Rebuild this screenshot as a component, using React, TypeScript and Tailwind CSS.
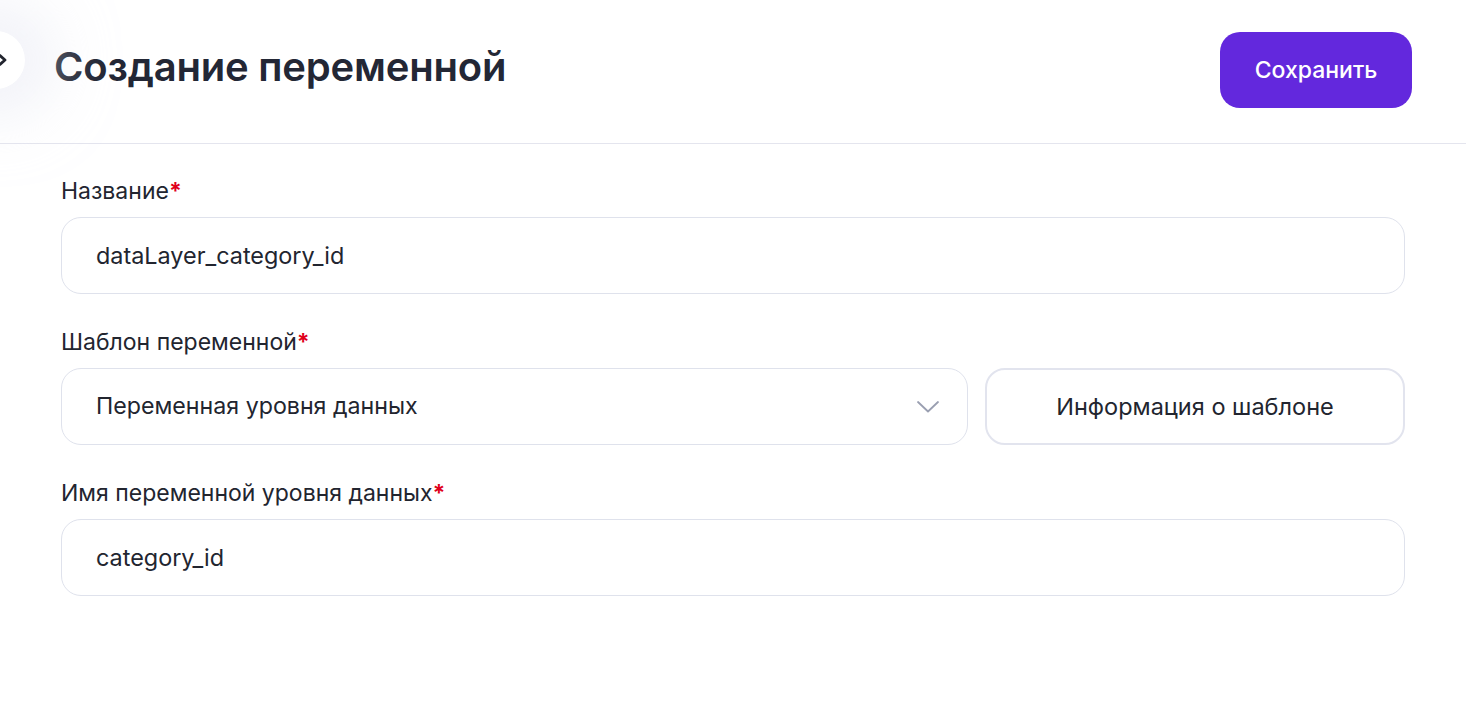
import React from "react";

const Req = () => <span className="font-bold text-[#e0001b]">*</span>;

export default function App() {
  return (
    <div className="relative min-h-[704px] w-full overflow-hidden bg-white text-[#22252f]" style={{ fontFamily: "Inter, 'Noto Sans', sans-serif" }}>
      <div className="absolute left-[-33px] top-[31px] flex h-[58px] w-[58px] items-center justify-end rounded-full bg-white pr-[17px] shadow-[0_0_60px_30px_rgba(230,232,242,0.55)]">
        <svg width="10" height="12" viewBox="0 0 10 12" fill="none">
          <path d="M2 1.5 L7 6 L2 10.5" stroke="#22252f" strokeWidth="2.8" strokeLinecap="round" strokeLinejoin="round" />
        </svg>
      </div>
      <header className="flex h-[144px] items-center justify-between border-b border-[#e4e5ee] pl-[54px] pr-[54px]">
        <h1 className="mb-[9px] text-[40px] font-semibold leading-[48px] tracking-[-0.2px] text-[#232735]">Создание переменной</h1>
        <button className="mt-[-3px] h-[76px] w-[192px] rounded-[20px] bg-[#6328dd] text-[23px] font-medium text-white">Сохранить</button>
      </header>
      <main className="flex flex-col gap-[35px] px-[61px] pt-[34px]">
        <div className="flex flex-col gap-[12px]">
          <label className="text-[23px] leading-[27px]">Название<Req /></label>
          <div className="flex h-[77px] items-center rounded-[20px] border border-[#dfe2ec] px-[34px] text-[23.4px]">dataLayer_category_id</div>
        </div>
        <div className="flex flex-col gap-[12px]">
          <label className="text-[23px] leading-[27px]">Шаблон переменной<Req /></label>
          <div className="flex gap-[17px]">
            <div className="flex h-[77px] flex-1 items-center justify-between rounded-[20px] border border-[#dfe2ec] pl-[34px] pr-[27px] text-[23.2px]">
              <span>Переменная уровня данных</span>
              <svg width="24" height="14" viewBox="0 0 24 14" fill="none">
                <path d="M2 2 L12 11.5 L22 2" stroke="#9a9fb1" strokeWidth="1.8" strokeLinecap="round" strokeLinejoin="round" />
              </svg>
            </div>
            <button className="flex h-[77px] w-[420px] items-center justify-center rounded-[20px] border-2 border-[#e2e4ee] text-[23.5px]">Информация о шаблоне</button>
          </div>
        </div>
        <div className="flex flex-col gap-[12px]">
          <label className="text-[23px] leading-[27px]">Имя переменной уровня данных<Req /></label>
          <div className="flex h-[77px] items-center rounded-[20px] border border-[#dfe2ec] px-[34px] text-[23.4px]">category_id</div>
        </div>
      </main>
    </div>
  );
}
